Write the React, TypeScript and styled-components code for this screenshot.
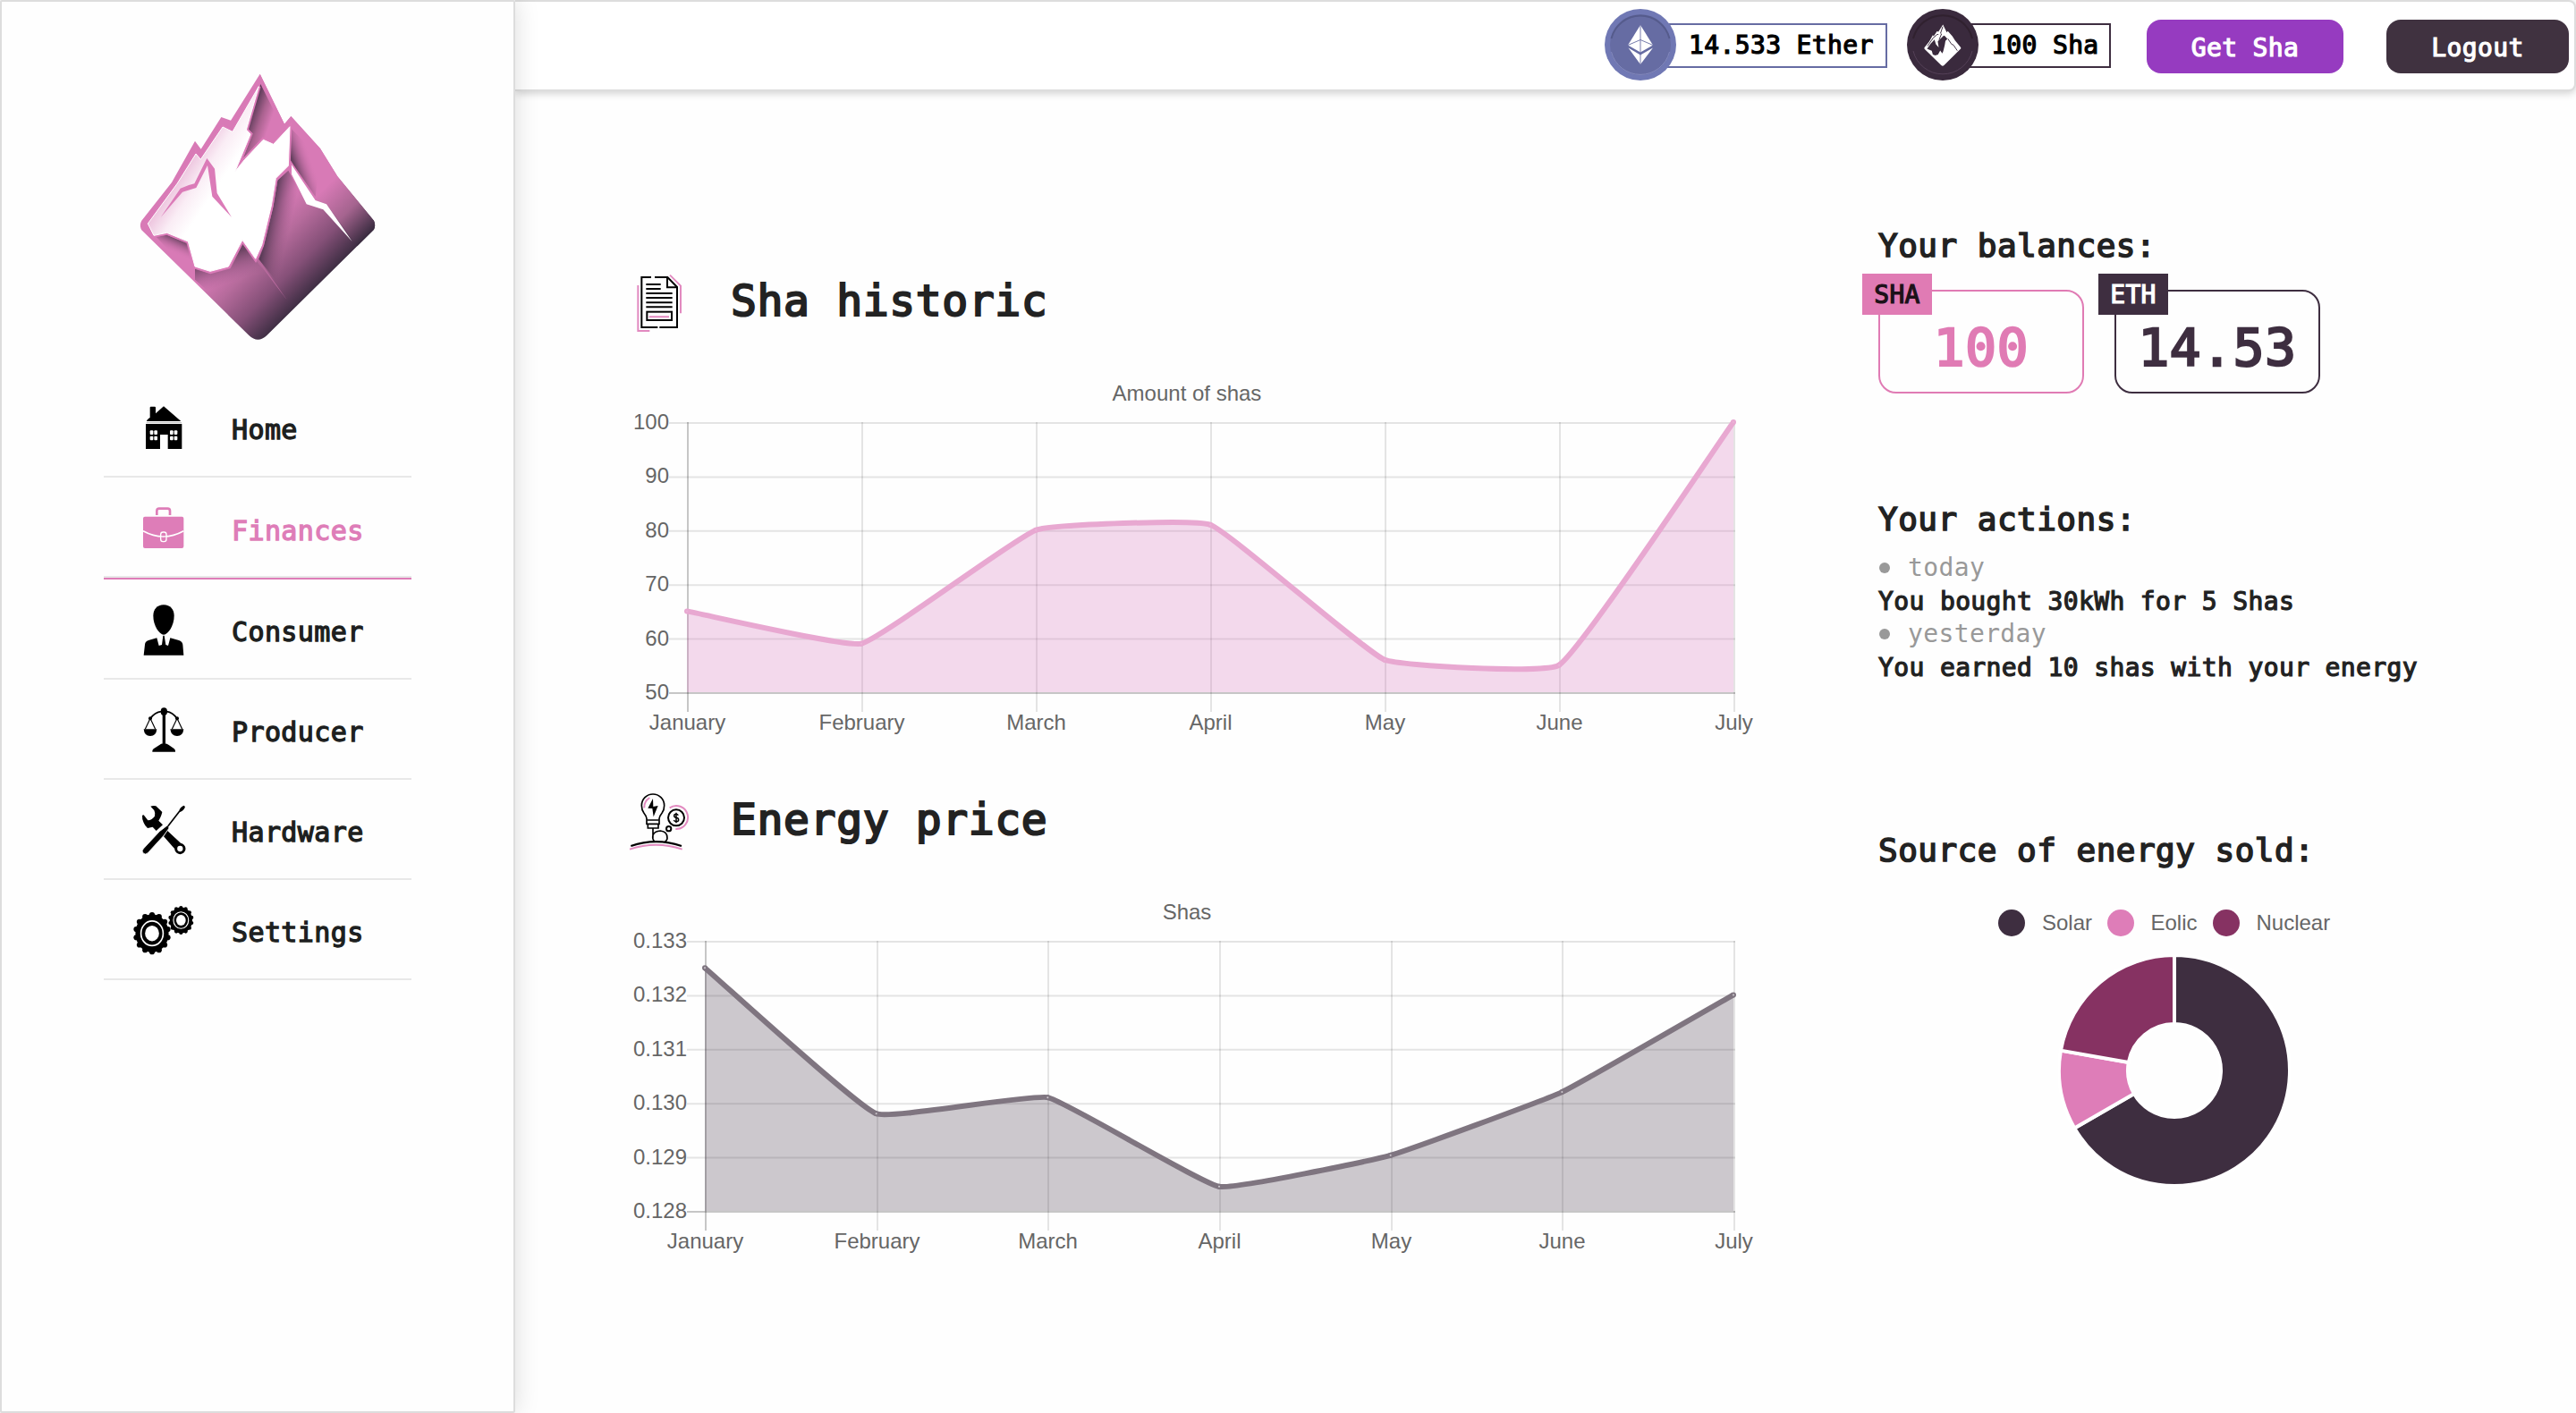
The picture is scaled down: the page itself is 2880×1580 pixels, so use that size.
import React from "react";
import styled, { createGlobalStyle } from "styled-components";

const PINK = "#de7db8";
const DARK = "#3e2e40";
const MONO = `"DejaVu Sans Mono", "Liberation Mono", monospace`;
const SANS = `"Liberation Sans", Arial, sans-serif`;

const GlobalStyle = createGlobalStyle`
  * { box-sizing: border-box; }
  body { margin: 0; background: #fefefe; font-family: ${MONO}; color: #222; }
  ul, h1, h2, p { margin: 0; padding: 0; }
`;

const mono = (size: number) => `
  font-family: ${MONO};
  font-size: ${size}px;
  font-weight: 400;
  letter-spacing: ${size * 0.0132}px;
  white-space: pre;
`;

/* Semi-bold: the regular face thickened by a thin outline. */
const monoSemi = (size: number) => `
  ${mono(size)}
  -webkit-text-stroke: ${size * 0.044}px currentColor;
`;

const Page = styled.div`
  display: grid;
  grid-template-columns: 576px 1fr;
  height: 1580px;
  width: 2880px;
  overflow: hidden;
`;

const Sidebar = styled.aside`
  display: flex;
  flex-direction: column;
  height: 1580px;
  border: 2px solid #ddd;
  border-radius: 2px;
  background: #fefefe;
  box-shadow: 0 0 28px rgba(0, 0, 0, 0.14);
  z-index: 2;
`;

const LogoWrap = styled.div`
  padding: 68px 0 0 128px;
  height: 420px;
`;

const Nav = styled.ul`
  list-style: none;
  margin: 0 114px;
`;

const NavItem = styled.li<{ $active?: boolean }>`
  display: flex;
  align-items: center;
  height: ${(p) => (p.$active ? 114 : 112)}px;
  padding-left: 27px;
  gap: 36px;
  border-bottom: 2px solid ${(p) => (p.$active ? PINK : "#e8e8e8")};
  box-shadow: ${(p) => (p.$active ? "inset 0 -2px 0 #e8e8e8" : "none")};
  color: ${(p) => (p.$active ? PINK : "#1d1f20")};
  svg { display: block; flex: none; }
`;

const NavLabel = styled.span`
  ${monoSemi(30)}
  line-height: 40px;
  padding-top: 7px;
`;

const Content = styled.div`
  display: flex;
  flex-direction: column;
`;

const Header = styled.header`
  display: flex;
  align-items: center;
  justify-content: flex-end;
  height: 102px;
  padding: 0 6px 2px 0;
  background: #fff;
  border: 2px solid #ddd;
  border-left: 0;
  border-radius: 0 8px 8px 0;
  box-shadow: 0 2px 10px rgba(0, 0, 0, 0.2);
`;

const Wallet = styled.div<{ $width: number; $gap: number }>`
  display: flex;
  align-items: center;
  width: ${(p) => p.$width}px;
  margin-right: ${(p) => p.$gap}px;
  svg { display: block; flex: none; z-index: 1; }
`;

const WalletAmount = styled.div<{ $color: string }>`
  ${monoSemi(28)}
  flex: 1;
  height: 50px;
  margin: 2px 0 0 -12px;
  padding: 1px 0 0 24px;
  border: 2px solid ${(p) => p.$color};
  line-height: 44px;
  color: #000;
`;

const Button = styled.button<{ $bg: string; $width: number; $gap?: number }>`
  ${monoSemi(28)}
  width: ${(p) => p.$width}px;
  height: 60px;
  margin: 4px ${(p) => p.$gap ?? 0}px 0 0;
  padding: 3px 0 0;
  border: 0;
  border-radius: 16px;
  background: ${(p) => p.$bg};
  color: #fff;
  line-height: 57px;
`;

const Main = styled.main`
  display: grid;
  grid-template-columns: 1280px 660px;
  column-gap: 120px;
  padding-left: 124px;
`;

const Charts = styled.div`
  padding-top: 196px;
`;

const Panel = styled.section`
  height: 580px;
`;

const PanelHead = styled.div`
  display: flex;
  align-items: center;
  height: 80px;
  margin-bottom: 32px;
  gap: 39px;
  svg { display: block; flex: none; }
`;

const PanelTitle = styled.h1`
  ${monoSemi(48)}
  line-height: 77px;
  padding-bottom: 3px;
`;

const ChartSvg = styled.svg`
  display: block;
  font-family: ${SANS};
  font-size: 24px;
  fill: #666;
  overflow: visible;
`;

const Side = styled.div`
  display: flex;
  flex-direction: column;
  padding-top: 150px;
`;

const SideBlock = styled.section<{ $height: number }>`
  height: ${(p) => p.$height}px;
`;

const SideTitle = styled.h2`
  ${monoSemi(36)}
  height: 48px;
  line-height: 45px;
`;

const Balances = styled.div`
  display: flex;
  gap: 34px;
  margin-top: 24px;
`;

const Balance = styled.div<{ $color: string }>`
  ${monoSemi(57.6)}
  position: relative;
  width: 230px;
  height: 116px;
  padding-top: 8px;
  border: 2px solid ${(p) => p.$color};
  border-radius: 20px;
  color: ${(p) => p.$color};
  line-height: 112px;
  text-align: center;
`;

const Tag = styled.span<{ $bg: string; $fg: string }>`
  ${monoSemi(28)}
  position: absolute;
  left: -20px;
  top: -20px;
  width: 78px;
  height: 46px;
  background: ${(p) => p.$bg};
  color: ${(p) => p.$fg};
  line-height: 47px;
`;

const Actions = styled.ul`
  list-style: none;
  margin-top: 10px;
`;

const Day = styled.li`
  ${mono(28)}
  display: flex;
  align-items: center;
  gap: 20px;
  height: 37px;
  color: #999;
  line-height: 37px;
  &::before {
    content: "";
    width: 12px;
    height: 12px;
    margin: 0 0 0 1px;
    border-radius: 50%;
    background: #999;
  }
`;

const Action = styled.li`
  ${monoSemi(28)}
  height: 37.4px;
  line-height: 40px;
`;

const Legend = styled.div`
  display: flex;
  margin: 39px 0 0 134px;
`;

const LegendItem = styled.div<{ $color: string; $width: number }>`
  display: flex;
  align-items: center;
  gap: 19px;
  width: ${(p) => p.$width}px;
  height: 34px;
  font: 24px/34px ${SANS};
  color: #666;
  &::before {
    content: "";
    width: 30px;
    height: 30px;
    flex: none;
    border-radius: 50%;
    background: ${(p) => p.$color};
  }
`;

const DonutWrap = styled.div`
  margin: 18px 0 0 201px;
  svg { display: block; }
`;

/* ---------- drawings ---------- */

const OUTLINE =
  "M482 38 564 206 586 180 684 288 742 382 864 530Q871 545 864 560L505 915Q475 944 445 915L85 562Q76 545 85 530L186 402 264 263 284 290 352 183 384 194Z";
const SNOW =
  "M478 80 436 225 450 240 398 366 430 326 493 259 527 274 582 215 577 346 535 388 520 480 488 612 467 658 423 595 376 684 315 700 264 684 241 600 170 571 126 580 106 540 205 405 267 306 283 325 357 216 390 232Z";

const MountainLogo = () => (
  <svg width="310" height="330" viewBox="0 0 930 990">
    <defs>
      <linearGradient id="body" gradientUnits="userSpaceOnUse" x1="510" y1="510" x2="716" y2="716">
        <stop offset="0" stopColor="#d87ab6" />
        <stop offset="0.3" stopColor="#b66b9c" />
        <stop offset="0.65" stopColor="#855078" />
        <stop offset="1" stopColor="#3a2c40" />
      </linearGradient>
      <linearGradient id="slope" gradientUnits="userSpaceOnUse" x1="560" y1="560" x2="716" y2="716">
        <stop offset="0" stopColor="#d87ab6" />
        <stop offset="0.5" stopColor="#a5648f" />
        <stop offset="1" stopColor="#33283b" />
      </linearGradient>
      <linearGradient id="peak" gradientUnits="userSpaceOnUse" x1="440" y1="190" x2="512" y2="215">
        <stop offset="0" stopColor="#4f344e" />
        <stop offset="0.55" stopColor="#a9628f" />
        <stop offset="1" stopColor="#d87ab6" />
      </linearGradient>
      <linearGradient id="right" gradientUnits="userSpaceOnUse" x1="582" y1="300" x2="640" y2="280">
        <stop offset="0" stopColor="#5a3a56" stopOpacity="0.9" />
        <stop offset="1" stopColor="#d87ab6" stopOpacity="0" />
      </linearGradient>
      <linearGradient id="core" gradientUnits="userSpaceOnUse" x1="510" y1="500" x2="590" y2="518">
        <stop offset="0" stopColor="#33273a" stopOpacity="0.85" />
        <stop offset="1" stopColor="#7d4c71" stopOpacity="0" />
      </linearGradient>
      <linearGradient id="foot" gradientUnits="userSpaceOnUse" x1="390" y1="640" x2="420" y2="725">
        <stop offset="0" stopColor="#4c3349" stopOpacity="0.75" />
        <stop offset="1" stopColor="#8a5480" stopOpacity="0" />
      </linearGradient>
      <linearGradient id="toe" gradientUnits="userSpaceOnUse" x1="212" y1="590" x2="190" y2="640">
        <stop offset="0" stopColor="#5b3b55" stopOpacity="0.95" />
        <stop offset="1" stopColor="#db7bb8" stopOpacity="0" />
      </linearGradient>
      <linearGradient id="snow" gradientUnits="userSpaceOnUse" x1="225" y1="360" x2="330" y2="430">
        <stop offset="0" stopColor="#edc4de" />
        <stop offset="0.5" stopColor="#faedf5" />
        <stop offset="1" stopColor="#fff" />
      </linearGradient>
    </defs>
    <path d={OUTLINE} fill="url(#body)" />
    <path d="M482 38 564 206 586 180 684 288 742 382 864 530Q871 545 864 560L808 616 705 475 668 462 583 326V222L527 272 470 200Z" fill="url(#slope)" />
    <path d="M484 72 548 200 527 268 493 252 426 320 457 238 441 222Z" fill="url(#peak)" />
    <path d="M587 222 684 320 668 450 583 326Z" fill="url(#right)" />
    <path d="M577 362 541 395 526 485 495 615 478 660 600 812 700 700 640 476Z" fill="url(#core)" />
    <path d="M424 608 383 691 316 709 264 692V728L400 850 560 790 470 665Z" fill="url(#foot)" />
    <path d="M134 584 170 578 237 605 262 690V725Z" fill="url(#toe)" />
    <path d="M469 660 478 660 572 796Z" fill="#b86a9d" />
    <path d={SNOW} fill="#fff" stroke="#db7bb8" strokeWidth="14" />
    <path d={SNOW} fill="url(#snow)" stroke="#fff" strokeWidth="3" />
    <path d="M304 321 330 356 338 438 387 519 322 449 306 345 268 420 222 434 149 519 215 422 243 411 262 406Z" fill="#db7bb8" />
    <path d="M583 326 668 462 660 470 583 350Z" fill="#db7bb8" />
    <path d="M588 343 668 462 705 475 791 600 694 493 638 475 588 374Z" fill="#fff" />
  </svg>
);

const HomeIcon = () => (
  <svg width="80" height="68" viewBox="130 39 240 204">
    <path d="M204 77q0-3 3-3h13q3 0 3 3v20l27-24 58 50H193q0-5 11-12Z" />
    <path d="M190 132h121v84h-47v-48h-26v48h-48Z" />
    <g fill="#fff">
      {[204, 218, 271, 285].map((x) =>
        [154, 173].map((y) => <rect key={`${x}-${y}`} x={x} y={y} width="11" height="14" rx="3" />)
      )}
    </g>
    <path d="M192 128h118" stroke="#999" strokeWidth="2" />
  </svg>
);

const BriefcaseIcon = () => (
  <svg width="80" height="68" viewBox="130 378 240 204" fill={PINK}>
    <path d="M227 438v-14q0-8 8-8h28q8 0 8 8v14" fill="none" stroke={PINK} strokeWidth="8" />
    <rect x="181" y="443" width="136" height="106" rx="6" />
    <path d="M181 491q68 37 136 0" fill="none" stroke="#fff" strokeWidth="5" />
    <rect x="240" y="495" width="19" height="32" rx="8" fill={PINK} stroke="#fff" strokeWidth="4" />
    <path d="M238 508q11 4 23 0" fill="none" stroke="#fff" strokeWidth="4" />
  </svg>
);

const PersonIcon = () => (
  <svg width="80" height="68" viewBox="130 717 240 204">
    <path d="M250 739c22 0 35 15 35 37 0 32-20 62-35 63-15-1-35-31-35-63 0-22 13-37 35-37Z" />
    <path d="M183 908l4-36q1-11 12-14l28-8 7 26 10-3 4-31h4l5 31 8 3 7-26 29 8q11 3 13 14l3 36Z" />
  </svg>
);

const ScalesIcon = () => (
  <svg width="80" height="68" viewBox="130 33 240 204">
    <path d="M251 75V195" stroke="#000" strokeWidth="10" />
    <ellipse cx="251" cy="77" rx="11" ry="13" />
    <path d="M242 77q-22 2-37 24M260 77q20 2 35 24" fill="none" stroke="#000" strokeWidth="5" />
    <circle cx="205" cy="100" r="6" />
    <circle cx="295" cy="100" r="6" />
    <path d="M204 102l-16 34M206 102l16 34M294 102l-16 34M296 102l16 34" stroke="#000" strokeWidth="3.5" />
    <path d="M183 136h44q-2 23-22 23t-22-23ZM272 136h45q-2 23-22 23t-23-23Z" />
    <path d="M212 212q-1-9 10-14l14-9q4-5 15-5t16 5l13 9q10 5 9 14Z" />
  </svg>
);

const ToolsIcon = () => (
  <svg width="80" height="68" viewBox="130 369 240 204">
    <path d="M206 395q8-4 18-1l21 20q-2 10-6 18l-6 11 14 14-22 20-12-13-17 4q-9-8-13-18-6-12-5-25l5-1 14 18q14-2 23-14 3-10-2-20Z" />
    <path d="M262 476l45 42-20 20-37-42Z" />
    <circle cx="305" cy="537" r="14" fill="#fff" stroke="#000" strokeWidth="9" />
    <path d="M276 460 180 553" stroke="#fff" strokeWidth="3" />
    <path d="M262 459q5 3 6 9l-17 24-54 59q-8 8-16 1-6-8 1-15l54-58Z" stroke="#fff" strokeWidth="2.5" />
    <path d="M264 462 304 410" stroke="#000" strokeWidth="5" />
    <path d="M302 410q0-9 15-18l5 4q-4 14-17 18Z" />
  </svg>
);

const Gear = ({ cx, cy, rx, ry, teeth }: { cx: number; cy: number; rx: number; ry: number; teeth: number }) => {
  const tooth = rx * 0.15;
  return (
    <g>
      <ellipse cx={cx} cy={cy} rx={rx * 0.9} ry={ry * 0.9} />
      {Array.from({ length: teeth }, (_, i) => {
        const a = (i / teeth) * Math.PI * 2 - Math.PI / 2;
        return <circle key={i} cx={cx + Math.cos(a) * rx * 0.87} cy={cy + Math.sin(a) * ry * 0.87} r={tooth} />;
      })}
      <ellipse cx={cx} cy={cy} rx={rx * 0.6} ry={ry * 0.58} fill="none" stroke="#fff" strokeWidth={rx * 0.08} />
      <ellipse cx={cx} cy={cy} rx={rx * 0.38} ry={ry * 0.37} fill="#fff" />
    </g>
  );
};

const GearsIcon = () => (
  <svg width="80" height="68" viewBox="130 705 240 204">
    <Gear cx={211} cy={821} rx={62} ry={71} teeth={14} />
    <Gear cx={308} cy={777} rx={42} ry={48} teeth={14} />
  </svg>
);

const EtherCoin = () => (
  <svg width="80" height="80" viewBox="0 0 80 80">
    <circle cx="40" cy="40" r="40" fill="#7078b4" />
    <circle cx="40" cy="40" r="34" fill="#666ca3" />
    <path d="M7.500 33A33.500 33.500 0 0 1 72.500 33" fill="none" stroke="#555b8c" strokeWidth="2" />
    <path d="M7.500 48A33.500 33.500 0 0 0 72.500 48" fill="none" stroke="#8389bd" strokeWidth="1" />
    <path d="M40 18 54 40.500 40 48.500 26 40.500Z" fill="#fff" />
    <path d="M26.500 43.500 40 51.500 54 43.500 40 62Z" fill="#fff" />
    <path d="M40 18V62M26 40.500 40 34.500 54 40.500" fill="none" stroke="#666ca3" strokeWidth="0.900" />
  </svg>
);

const ShaCoin = () => (
  <svg width="80" height="80" viewBox="0 0 80 80">
    <circle cx="40" cy="40" r="40" fill="#3a2a3d" />
    <path d="M7 33A34 34 0 0 1 73 33" fill="none" stroke="#30212f" strokeWidth="2" />
    <path d="M7 47A34 34 0 0 0 73 47" fill="none" stroke="#544057" strokeWidth="1" />
    <g transform="translate(15.200 15.500) scale(0.0520)">
      <path d={OUTLINE} fill="#fff" />
      <path d="M577 346 535 388 520 480 488 612 467 658 423 595 376 684 315 700 264 684 241 600 170 571 140 560 215 450 300 360 330 460 390 530 370 400 440 330 500 275 527 290Z" fill="#3a2a3d" />
      <path d="M478 80 430 225 450 240 398 366M384 250 357 250 267 330 150 500M588 343 668 462 705 475 791 600" fill="none" stroke="#3a2a3d" strokeWidth="18" />
    </g>
  </svg>
);

const DocumentIcon = () => (
  <svg width="78" height="78" viewBox="60 57 234 234" fill="none" strokeWidth="6">
    <path d="M144 90H112V258H166M156 90H199L231 123V258H172" stroke="#000" />
    <path d="M198 92V124H231" stroke="#000" />
    <path d="M127 114H176M127 129H176M127 144H215M127 159H215M127 175H215M127 190H215" stroke="#000" />
    <rect x="130" y="206" width="83" height="28" stroke="#000" />
    <path d="M137 223H204M100 117V270H139M207 83 243 119V211" stroke="#e28ac0" />
  </svg>
);

const EnergyIcon = () => (
  <svg width="78" height="78" viewBox="60 57 234 234" fill="none" strokeWidth="5">
    <g stroke="#000">
      <path d="M129 184V166Q128 158 120 148 112 137 112 122A38 38 0 0 1 188 122Q188 137 180 148 172 158 171 166V184Z" />
      <path d="M130 171H170M133 185V198H168V185M150 199V222Q155 208 175 207 199 210 198 232 197 241 190 243M150 222Q147 234 155 243" />
      <path d="M76 258Q160 229 246 258" strokeWidth="7" />
      <circle cx="203" cy="200" r="8" strokeWidth="6" />
      <circle cx="228" cy="163" r="27" strokeWidth="6" />
      <path d="M235 155Q232 151 228 151 221 151 221 157 221 162 228 163 236 164 236 170 236 176 228 176 222 176 220 171M228 146V181" strokeWidth="4.500" />
    </g>
    <path d="M150 99 133 131 148 132 152 160 167 123 151 126Z" fill="#000" />
    <path d="M121 130Q120 108 139 96M206 130A39 39 0 1 1 226 201M72 269Q160 240 248 269" stroke="#e28ac0" strokeWidth="6" />
  </svg>
);

/* ---------- charts ---------- */

const MONTHS = ["January", "February", "March", "April", "May", "June", "July"];

type Point = { x: number; y: number };

/* Distance-weighted smoothing of a poly-line into cubic segments. */
const smoothPath = (pts: Point[], tension: number, top: number) => {
  const controls = pts.map((p, i) => {
    const a = pts[i - 1] ?? p;
    const b = pts[i + 1] ?? p;
    const d1 = Math.hypot(p.x - a.x, p.y - a.y);
    const d2 = Math.hypot(b.x - p.x, b.y - p.y);
    const f1 = (tension * d1) / (d1 + d2);
    const f2 = (tension * d2) / (d1 + d2);
    return {
      before: { x: p.x - f1 * (b.x - a.x), y: Math.max(top, p.y - f1 * (b.y - a.y)) },
      after: { x: p.x + f2 * (b.x - a.x), y: Math.max(top, p.y + f2 * (b.y - a.y)) },
    };
  });
  return pts.reduce((d, p, i) => {
    if (i === 0) return `M${p.x} ${p.y}`;
    const c1 = controls[i - 1].after;
    const c2 = controls[i].before;
    return `${d}C${c1.x} ${c1.y} ${c2.x} ${c2.y} ${p.x} ${p.y}`;
  }, "");
};

type LineChartProps = {
  title: string;
  data: number[];
  ticks: string[];
  left: number;
  line: string;
  fill: string;
  dot: string;
};

const LineChart = ({ title, data, ticks, left, line, fill, dot }: LineChartProps) => {
  const right = 1239;
  const top = 63;
  const bottom = 365;
  const max = parseFloat(ticks[0]);
  const min = parseFloat(ticks[ticks.length - 1]);
  const xAt = (i: number) => left + ((right - left) * i) / 6;
  const pts = data.map((v, i) => ({ x: xAt(i) - 1, y: bottom - 1 - ((v - min) / (max - min)) * (bottom - top) }));
  const curve = smoothPath(pts, 0.1, top - 1);
  return (
    <ChartSvg width="1280" height="420" viewBox="0 0 1280 420">
      <text x="627" y="38" textAnchor="middle">{title}</text>
      {ticks.map((t, i) => {
        const y = top + ((bottom - top) * i) / 5;
        const last = i === ticks.length - 1;
        return (
          <g key={t}>
            <path d={`M${left - 21} ${y}H${right + 1}`} stroke={last ? "rgba(0,0,0,.22)" : "rgba(0,0,0,.1)"} strokeWidth="2" />
            <text x={left - 21} y={y + 7} textAnchor="end">{t}</text>
          </g>
        );
      })}
      {MONTHS.map((m, i) => {
        const x = Math.round(xAt(i));
        return (
          <g key={m}>
            <path d={`M${x} ${top - 1}V${bottom + 21}`} stroke={i === 0 ? "rgba(0,0,0,.22)" : "rgba(0,0,0,.1)"} strokeWidth="2" />
            <text x={x - 0.5} y="406" textAnchor="middle">{m}</text>
          </g>
        );
      })}
      <path d={`${curve}L${right - 1} ${bottom - 1}L${left - 1} ${bottom - 1}Z`} fill={fill} />
      <path d={curve} fill="none" stroke={line} strokeWidth="6" strokeLinejoin="round" />
      {pts.map((p, i) => (
        <circle key={i} cx={p.x} cy={p.y} r="2" fill={dot} stroke={line} strokeWidth="2" />
      ))}
    </ChartSvg>
  );
};

const SOURCES = [
  { name: "Solar", color: DARK, share: 240, width: 121.5 },
  { name: "Eolic", color: PINK, share: 40, width: 118 },
  { name: "Nuclear", color: "#863262", share: 80, width: 140 },
];

const Donut = () => {
  const at = (deg: number, r: number) => {
    const a = ((deg - 90) * Math.PI) / 180;
    return `${130 + Math.cos(a) * r} ${130 + Math.sin(a) * r}`;
  };
  let start = 0;
  return (
    <svg width="260" height="260" viewBox="0 0 260 260">
      {SOURCES.map((s) => {
        const end = start + s.share;
        const large = s.share > 180 ? 1 : 0;
        const d = `M${at(start, 129)}A129 129 0 ${large} 1 ${at(end, 129)}L${at(end, 52)}A52 52 0 ${large} 0 ${at(start, 52)}Z`;
        start = end;
        return <path key={s.name} d={d} fill={s.color} stroke="#fff" strokeWidth="4" />;
      })}
    </svg>
  );
};

const NAV = [
  { label: "Home", Icon: HomeIcon },
  { label: "Finances", Icon: BriefcaseIcon, active: true },
  { label: "Consumer", Icon: PersonIcon },
  { label: "Producer", Icon: ScalesIcon },
  { label: "Hardware", Icon: ToolsIcon },
  { label: "Settings", Icon: GearsIcon },
];

export default function App() {
  return (
    <>
      <GlobalStyle />
      <Page>
        <Sidebar>
          <LogoWrap>
            <MountainLogo />
          </LogoWrap>
          <Nav>
            {NAV.map(({ label, Icon, active }) => (
              <NavItem key={label} $active={active}>
                <Icon />
                <NavLabel>{label}</NavLabel>
              </NavItem>
            ))}
          </Nav>
        </Sidebar>
        <Content>
          <Header>
            <Wallet $width={316} $gap={22}>
              <EtherCoin />
              <WalletAmount $color="#666ca3">14.533 Ether</WalletAmount>
            </Wallet>
            <Wallet $width={228} $gap={40}>
              <ShaCoin />
              <WalletAmount $color={DARK}>100 Sha</WalletAmount>
            </Wallet>
            <Button $bg="#963bc0" $width={220} $gap={48}>Get Sha</Button>
            <Button $bg="#403240" $width={204}>Logout</Button>
          </Header>
          <Main>
            <Charts>
              <Panel>
                <PanelHead>
                  <DocumentIcon />
                  <PanelTitle>Sha historic</PanelTitle>
                </PanelHead>
                <LineChart
                  title="Amount of shas"
                  data={[65, 59, 80, 81, 56, 55, 100]}
                  ticks={["100", "90", "80", "70", "60", "50"]}
                  left={69}
                  line="#e8a8d1"
                  fill="rgba(217,123,189,.28)"
                  dot="#eab3d7"
                />
              </Panel>
              <Panel>
                <PanelHead>
                  <EnergyIcon />
                  <PanelTitle>Energy price</PanelTitle>
                </PanelHead>
                <LineChart
                  title="Shas"
                  data={[0.1325, 0.1298, 0.1301, 0.12845, 0.12903, 0.1302, 0.132]}
                  ticks={["0.133", "0.132", "0.131", "0.130", "0.129", "0.128"]}
                  left={89}
                  line="#7f7580"
                  fill="rgba(62,46,64,.26)"
                  dot="#cfcad0"
                />
              </Panel>
            </Charts>
            <Side>
              <SideBlock $height={306}>
                <SideTitle>Your balances:</SideTitle>
                <Balances>
                  <Balance $color="#e07bb4">
                    <Tag $bg="#e07bb4" $fg="#1c1118">SHA</Tag>
                    100
                  </Balance>
                  <Balance $color={DARK}>
                    <Tag $bg={DARK} $fg="#fff">ETH</Tag>
                    14.53
                  </Balance>
                </Balances>
              </SideBlock>
              <SideBlock $height={370}>
                <SideTitle>Your actions:</SideTitle>
                <Actions>
                  <Day>today</Day>
                  <Action>You bought 30kWh for 5 Shas</Action>
                  <Day>yesterday</Day>
                  <Action>You earned 10 shas with your energy</Action>
                </Actions>
              </SideBlock>
              <SideBlock $height={430}>
                <SideTitle>Source of energy sold:</SideTitle>
                <Legend>
                  {SOURCES.map((s) => (
                    <LegendItem key={s.name} $color={s.color} $width={s.width}>{s.name}</LegendItem>
                  ))}
                </Legend>
                <DonutWrap>
                  <Donut />
                </DonutWrap>
              </SideBlock>
            </Side>
          </Main>
        </Content>
      </Page>
    </>
  );
}
